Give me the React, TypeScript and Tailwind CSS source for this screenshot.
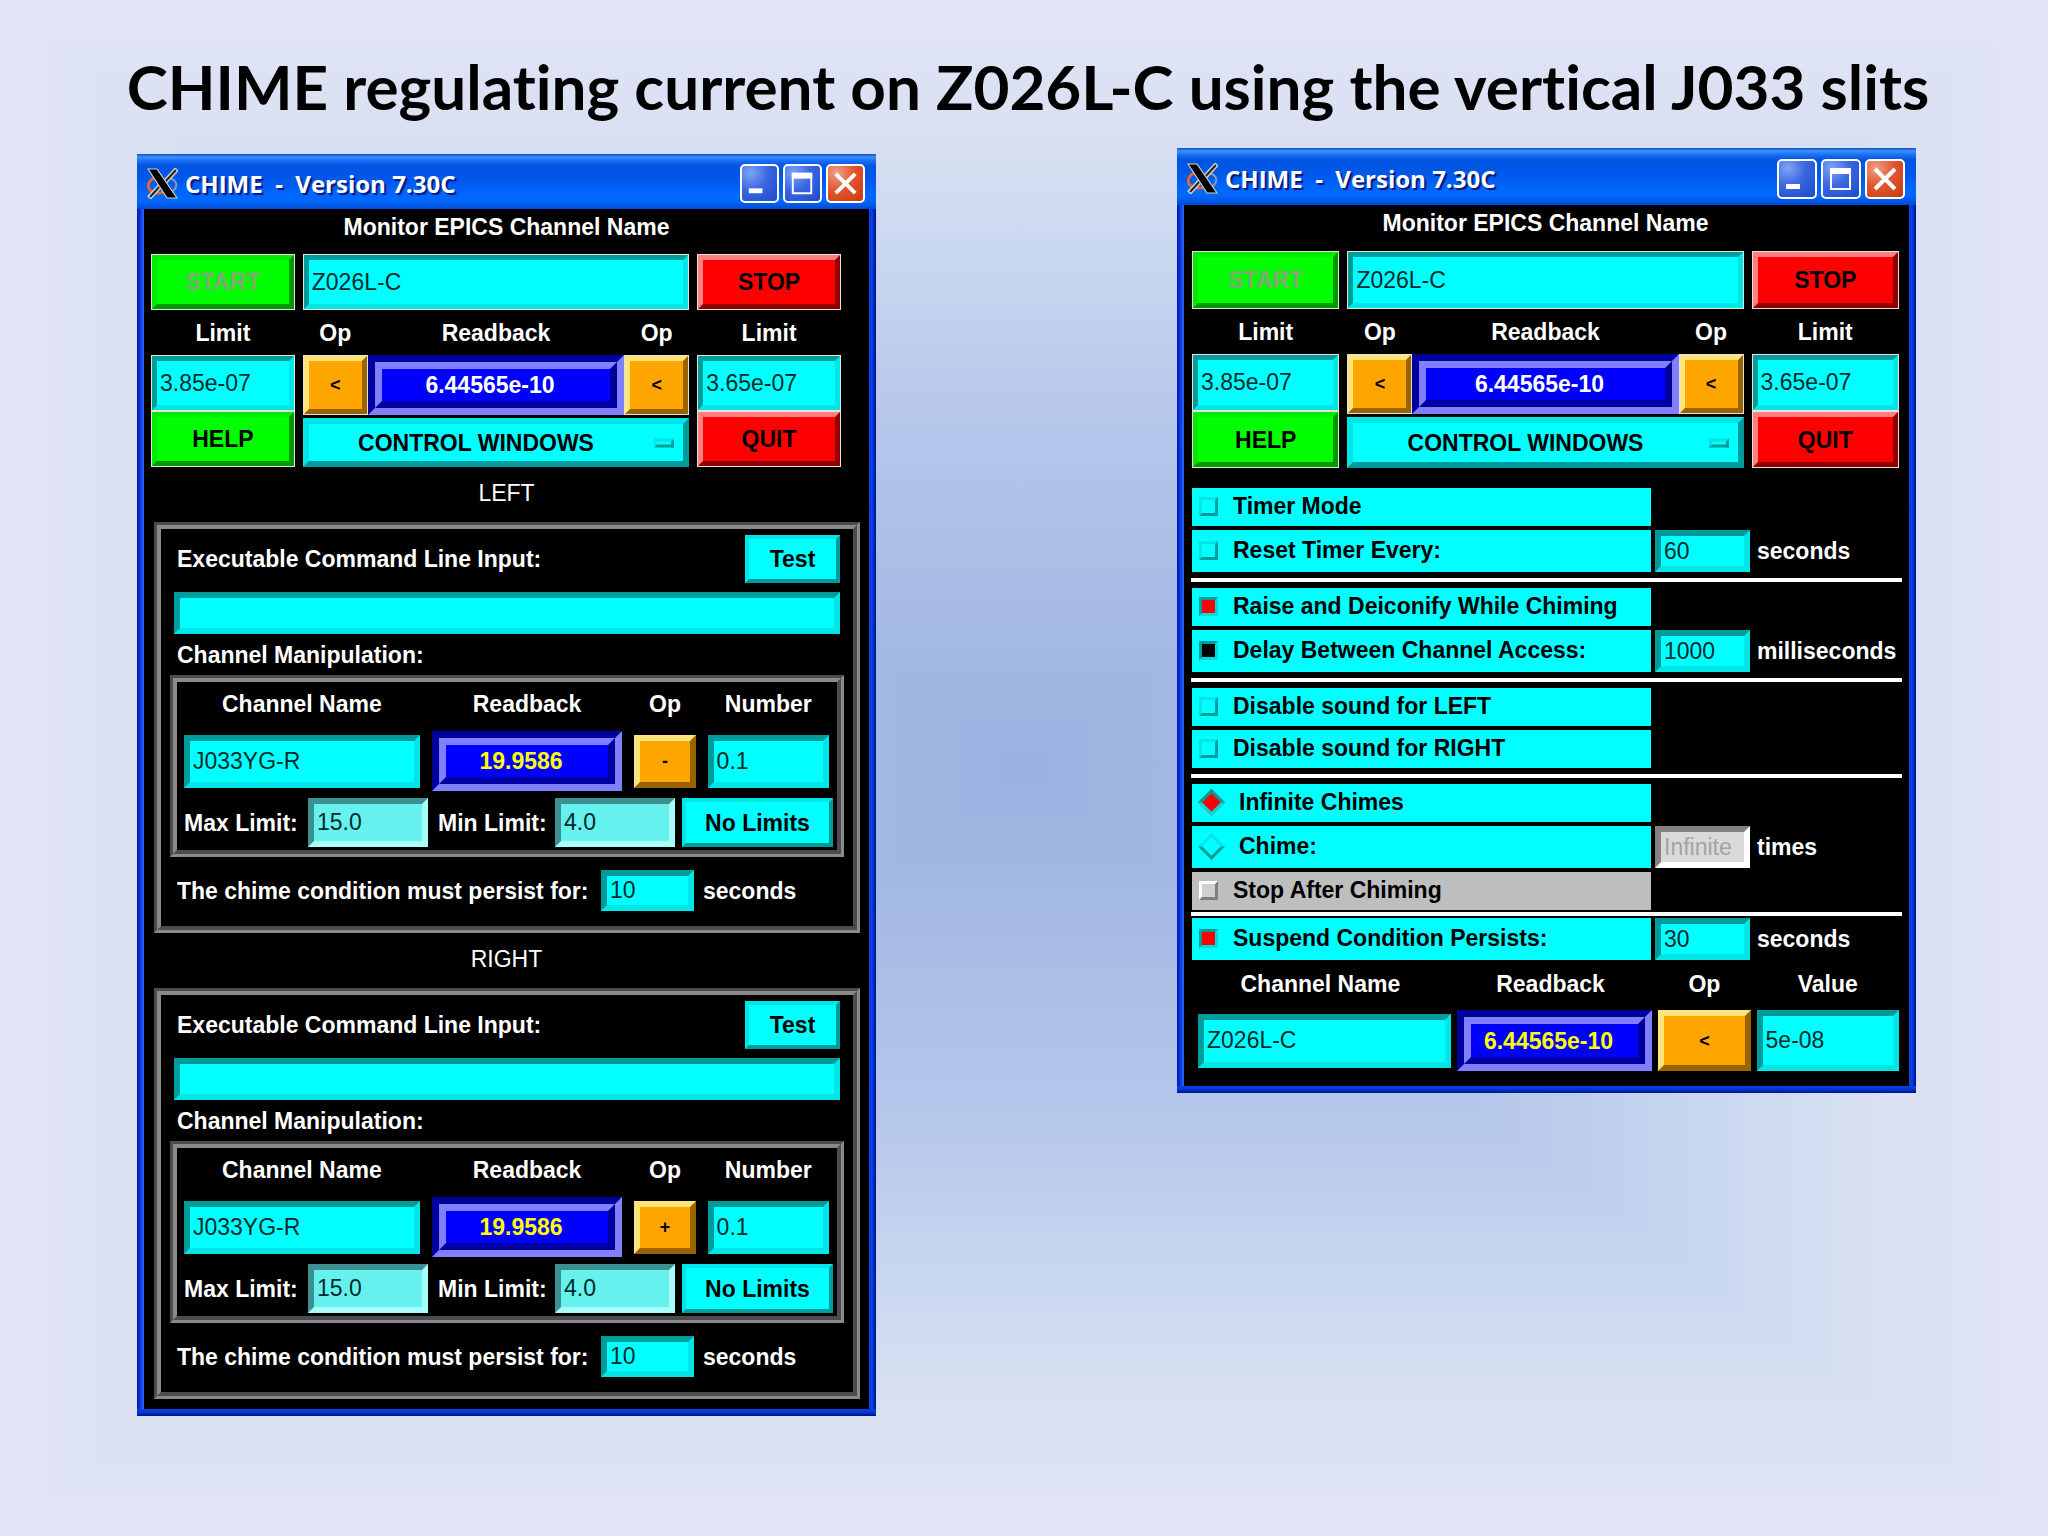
import React, { useId } from 'react';

const raisedCyan = 'border-t-[#00e6e6] border-l-[#00e6e6] border-b-[#009c9c] border-r-[#009c9c] bg-[#00ffff]';
const sunkenCyan = 'border-t-[#009c9c] border-l-[#009c9c] border-b-[#00e6e6] border-r-[#00e6e6] bg-[#00ffff]';
const sunkenPale = 'border-t-[#3c9090] border-l-[#3c9090] border-b-[#a8fffa] border-r-[#a8fffa] bg-[#66f0ee]';
const sunkenGray = 'border-t-[#868284] border-l-[#868284] border-b-white border-r-white bg-[#dcd9db] text-[#a3a3a3]';
const raisedGreen = 'border-t-[#00ea00] border-l-[#00ea00] border-b-[#009a00] border-r-[#009a00] bg-[#00ff00]';
const raisedRed = 'border-t-[#ff8080] border-l-[#ff8080] border-b-[#900000] border-r-[#900000] bg-[#ff0000]';
const raisedOrange = 'border-t-[#ffe47a] border-l-[#ffe47a] border-b-[#996300] border-r-[#996300] bg-[#ffa500]';
const outlined = 'outline-1 -outline-offset-1 outline-[#e6e2d6]';

const Backdrop = () => (
  <svg className="absolute inset-0 -z-10 h-full w-full" viewBox="0 0 100 100" preserveAspectRatio="none" aria-hidden="true">
    <defs>
      <linearGradient id="fade-y" x1="0" y1="0" x2="0" y2="1">
        <stop offset="0" stopColor="#e2e4f7" />
        <stop offset="0.08" stopColor="#d9e1f2" />
        <stop offset="0.16" stopColor="#cad8ef" />
        <stop offset="0.28" stopColor="#b4c6ea" />
        <stop offset="0.5" stopColor="#9ab1e0" />
        <stop offset="0.72" stopColor="#b4c6ea" />
        <stop offset="0.84" stopColor="#cad8ef" />
        <stop offset="0.92" stopColor="#d9e1f2" />
        <stop offset="1" stopColor="#e2e4f7" />
      </linearGradient>
      <linearGradient id="fade-x" gradientUnits="userSpaceOnUse" x1="0" y1="0" x2="100" y2="0">
        <stop offset="0" stopColor="#e2e4f7" />
        <stop offset="0.08" stopColor="#d9e1f2" />
        <stop offset="0.16" stopColor="#cad8ef" />
        <stop offset="0.28" stopColor="#b4c6ea" />
        <stop offset="0.5" stopColor="#9ab1e0" />
        <stop offset="0.72" stopColor="#b4c6ea" />
        <stop offset="0.84" stopColor="#cad8ef" />
        <stop offset="0.92" stopColor="#d9e1f2" />
        <stop offset="1" stopColor="#e2e4f7" />
      </linearGradient>
    </defs>
    <rect width="100" height="100" fill="url(#fade-y)" />
    <path d="M0 0 L50 50 L0 100 Z M100 0 L50 50 L100 100 Z" fill="url(#fade-x)" />
  </svg>
);

const XLogo = () => (
  <svg className="h-[31px] w-[31px] shrink-0" viewBox="0 0 31 31" aria-hidden="true">
    <path d="M7 10 C0 14 0 20 4 23 C9 26 14 26 19 23" fill="none" stroke="#e0643a" strokeWidth="3" />
    <path d="M22 10 C30 12 31 18 27 22 C24 25 21 25 18 23" fill="none" stroke="#8a9bb8" strokeWidth="2" />
    <path d="M30 1 L17 15 M14 17 L2 30" stroke="#d8d4c4" strokeWidth="5" />
    <path d="M29 2 L17 15 M14 17 L3 29" stroke="#222" strokeWidth="2" />
    <path d="M1 1 L10 1 L30 30 L20 30 Z" fill="#000" stroke="#d8d4c4" strokeWidth="1.2" />
  </svg>
);

const captionButton =
  'flex items-center justify-center rounded-[5px] border-2 border-white bg-[radial-gradient(circle_at_25%_20%,#7fa4f8_0%,#3a66e0_45%,#1c4ad0_100%)]';

const TitleBar = ({ large }: { large?: boolean }) => {
  const size = large ? 'h-[40px] w-[40px]' : 'h-[39px] w-[39px]';
  return (
    <div
      className={`flex items-center bg-[linear-gradient(180deg,#0a4fc4_0px,#3b90ff_3px,#1a6cf4_7px,#0054e0_12px,#0058ea_26px,#0068ff_42px,#0066fc_48px,#004ad4_100%)] pt-1 pr-[11px] pl-[10px] ${large ? 'h-[57px]' : 'h-[55px]'}`}
    >
      <XLogo />
      <h2 className="flex-1 pl-[7px] font-['Open_Sans','Noto_Sans',sans-serif] text-[24px] leading-[30px] font-bold whitespace-pre text-white [text-shadow:2px_2px_1px_#0a1883]">
        {'CHIME  -  Version 7.30C'}
      </h2>
      <div className="flex gap-1">
        <button type="button" aria-label="Minimize" className={`${captionButton} ${size}`}>
          <svg className="h-full w-full" viewBox="0 0 36 36">
            <rect x="7" y="23" width="14" height="5" fill="#fff" />
          </svg>
        </button>
        <button type="button" aria-label="Maximize" className={`${captionButton} ${size}`}>
          <svg className="h-full w-full" viewBox="0 0 36 36">
            <path d="M8 8 H27 V28 H8 Z" fill="none" stroke="#fff" strokeWidth="2" />
            <rect x="7" y="7" width="21" height="6" fill="#fff" />
          </svg>
        </button>
        <button
          type="button"
          aria-label="Close"
          className={`flex items-center justify-center rounded-[5px] border-2 border-white bg-[radial-gradient(circle_at_25%_20%,#f0a088_0%,#e2562f_45%,#c8380e_100%)] ${size}`}
        >
          <svg className="h-full w-full" viewBox="0 0 36 36">
            <path d="M8 8 L28 28 M28 8 L8 28" stroke="#fff" strokeWidth="4" />
          </svg>
        </button>
      </div>
    </div>
  );
};

const Window = ({ large, children }: { large?: boolean; children: React.ReactNode }) => (
  <section className="bg-[linear-gradient(90deg,#0014b8_0px,#0a35dc_3px,#2f66f2_7px,#0a3ee0_20px,#0a3ee0_calc(100%-7px),#0540e4_calc(100%-4px),#00108c_100%)]">
    <TitleBar large={large} />
    <div className="mx-[7px] bg-black text-white">{children}</div>
    <div className="h-[7px] bg-[linear-gradient(180deg,#0a44e4,#0334d0_50%,#00108c)]" />
  </section>
);

const Readback = ({ value, color = 'text-white' }: { value: string; color?: string }) => (
  <div className="flex h-full w-full min-w-0 border-[7px] border-t-[#00009c] border-r-[#8080ff] border-b-[#8080ff] border-l-[#00009c]">
    <output
      className={`flex flex-1 items-center justify-center border-[7px] border-t-[#8080ff] border-r-[#00009c] border-b-[#0000a4] border-l-[#8080ff] bg-[#0000ff] pr-[12px] font-bold whitespace-nowrap ${color}`}
    >
      {value}
    </output>
  </div>
);

const Entry = ({ label, id, value, className = '', tone = sunkenCyan, disabled }: {
  label?: string;
  id?: string;
  value: string;
  className?: string;
  tone?: string;
  disabled?: boolean;
}) => (
  <input
    type="text"
    id={id}
    aria-label={label}
    defaultValue={value}
    disabled={disabled}
    className={`min-w-0 rounded-none border-[6px] pl-[3px] ${disabled ? '' : 'text-[#002b2b]'} ${tone} ${className}`}
  />
);

const OpButton = ({ op, className = '' }: { op: string; className?: string }) => (
  <button type="button" aria-label={`Operator ${op}`} className={`border-[6px] text-[18px] font-bold text-black ${raisedOrange} ${className}`}>
    {op}
  </button>
);

const MonitorHeader = ({ large }: { large?: boolean }) => {
  const cols = 'grid grid-cols-[144fr_387fr_144fr] gap-x-[8px]';
  const half = large ? 'h-[57px]' : 'h-[56px]';
  return (
    <header className={large ? 'pr-[10px] pl-[8px]' : 'pr-[28px] pl-[7px]'}>
      <p className={`pt-1 text-center font-bold ${large ? 'h-[46px]' : 'ml-[21px] h-[45px]'}`}>Monitor EPICS Channel Name</p>
      <div className={`${cols} ${large ? 'h-[58px]' : 'h-[56px]'}`}>
        <button type="button" disabled className={`border-[6px] font-bold text-[#86a678] ${raisedGreen} ${outlined}`}>START</button>
        <Entry label="Monitor EPICS Channel Name" value="Z026L-C" className={outlined} />
        <button type="button" className={`border-[6px] font-bold text-black ${raisedRed} ${outlined}`}>STOP</button>
      </div>
      <div className={`${cols} h-[45px] items-center text-center font-bold`}>
        <span>Limit</span>
        <div className="flex">
          <span className="w-[65px]">Op</span>
          <span className="flex-1">Readback</span>
          <span className="w-[65px]">Op</span>
        </div>
        <span>Limit</span>
      </div>
      <div className={cols}>
        <div className="flex min-w-0 flex-col">
          <Entry label="Upper limit" value="3.85e-07" className={`${half} ${outlined}`} />
          <button type="button" className={`border-[6px] font-bold text-black ${half} ${raisedGreen} ${outlined}`}>HELP</button>
        </div>
        <div className="flex min-w-0 flex-col gap-[3px]">
          <div className="flex h-[60px]">
            <OpButton op="<" className={`w-[65px] shrink-0 ${outlined}`} />
            <Readback value="6.44565e-10" />
            <OpButton op="<" className={`w-[65px] shrink-0 ${outlined}`} />
          </div>
          <div className="relative flex flex-1">
            <select
              aria-label="Control windows"
              className={`w-full appearance-none rounded-none border-[6px] pr-[40px] text-center font-bold text-black [text-align-last:center] ${raisedCyan}`}
            >
              <option>CONTROL WINDOWS</option>
            </select>
            <span className={`pointer-events-none absolute top-1/2 right-[15px] h-[9px] w-[20px] -translate-y-1/2 border-[3px] ${raisedCyan}`} />
          </div>
        </div>
        <div className="flex min-w-0 flex-col">
          <Entry label="Lower limit" value="3.65e-07" className={`${half} ${outlined}`} />
          <button type="button" className={`border-[6px] font-bold text-black ${half} ${raisedRed} ${outlined}`}>QUIT</button>
        </div>
      </div>
    </header>
  );
};

const Groove = ({ className = '', children }: { className?: string; children: React.ReactNode }) => (
  <div className={`border-[3px] border-t-[#4d4b4d] border-r-[#8b898b] border-b-[#8b898b] border-l-[#4d4b4d] ${className}`}>
    <div className="border-4 border-t-[#8b898b] border-r-[#4d4b4d] border-b-[#4d4b4d] border-l-[#8b898b]">{children}</div>
  </div>
);

const SidePanel = ({ side, op }: { side: string; op: string }) => {
  const id = useId();
  return (
    <>
      <h3 className="flex h-[55px] items-center justify-center pb-1">{side}</h3>
      <Groove className="mr-[9px] ml-[10px]">
        <div className="px-[9px] pt-[6px] pb-[15px]">
          <div className="mx-1 flex h-[48px] items-center justify-between pl-[3px]">
            <label htmlFor={`${id}-cmd`} className="font-bold">Executable Command Line Input:</label>
            <button type="button" className={`h-full w-[95px] border-4 font-bold text-black ${raisedCyan}`}>Test</button>
          </div>
          <div className="mx-1 mt-[9px] flex h-[42px]">
            <Entry id={`${id}-cmd`} value="" className="w-full" />
          </div>
          <p className="ml-[7px] flex h-[41px] items-center font-bold">Channel Manipulation:</p>
          <Groove>
            <div className="pr-[4px] pb-[3px] pl-[7px]">
              <div className="mr-[4px] grid grid-cols-[235fr_190fr_61fr_121fr] items-center gap-x-[12px] text-center">
                <span className="h-[49px] pt-2 font-bold">Channel Name</span>
                <span className="h-[49px] pt-2 font-bold">Readback</span>
                <span className="h-[49px] pt-2 font-bold">Op</span>
                <span className="h-[49px] pt-2 font-bold">Number</span>
                <Entry label={`${side} channel name`} value="J033YG-R" className="h-[53px]" />
                <div className="h-[60px]">
                  <Readback value="19.9586" color="text-[#ffff00]" />
                </div>
                <OpButton op={op} className="h-[53px]" />
                <Entry label={`${side} number`} value="0.1" className="h-[53px]" />
              </div>
              <div className="mt-[7px] flex h-[49px] items-center font-bold">
                <label htmlFor={`${id}-max`} className="w-[124px]">Max Limit:</label>
                <Entry id={`${id}-max`} value="15.0" tone={sunkenPale} className="h-full w-[120px] font-normal" />
                <label htmlFor={`${id}-min`} className="ml-[10px] w-[117px]">Min Limit:</label>
                <Entry id={`${id}-min`} value="4.0" tone={sunkenPale} className="h-full w-[120px] font-normal" />
                <button type="button" className={`ml-[7px] h-full flex-1 border-4 text-black ${raisedCyan}`}>No Limits</button>
              </div>
            </div>
          </Groove>
          <div className="mt-[13px] ml-[7px] flex h-[41px] items-center font-bold">
            <label htmlFor={`${id}-persist`} className="w-[424px]">The chime condition must persist for:</label>
            <Entry id={`${id}-persist`} value="10" className="h-full w-[93px] font-normal" />
            <span className="ml-[9px]">seconds</span>
          </div>
        </div>
      </Groove>
    </>
  );
};

type OptionProps = {
  label: string;
  type?: 'checkbox' | 'radio';
  checked?: boolean;
  mark?: string;
  muted?: boolean;
  entry?: string;
  unit?: string;
};

const OptionRow = ({ label, type = 'checkbox', checked, mark = 'bg-[#ff0000]', muted, entry, unit }: OptionProps) => {
  const grayBox = 'border-t-white border-l-white border-b-[#7f7f7f] border-r-[#7f7f7f] bg-[#d0d0d0]';
  const onBox = 'border-t-[#009c9c] border-l-[#009c9c] border-b-[#00dcdc] border-r-[#00dcdc]';
  const box = muted ? grayBox : checked ? `${onBox} ${mark}` : raisedCyan;
  const shape = type === 'radio' ? 'ml-[3px] mr-[18px] rotate-45' : 'mr-[15px]';
  return (
    <div className={`mx-[8px] flex items-center ${entry ? 'h-[42px]' : 'h-[38px]'}`}>
      <label className={`flex h-full w-[459px] items-center pb-[2px] pl-[7px] font-bold text-black ${muted ? 'bg-[#bebebe]' : 'bg-[#00ffff]'}`}>
        <input
          type={type}
          name={type === 'radio' ? 'chime-count' : undefined}
          defaultChecked={checked}
          disabled={muted}
          className={`h-[19px] w-[19px] shrink-0 appearance-none rounded-none border-[3px] ${box} ${shape}`}
        />
        {label}
      </label>
      {entry && (
        <>
          <Entry
            label={label}
            value={entry}
            disabled={entry === 'Infinite'}
            tone={entry === 'Infinite' ? sunkenGray : sunkenCyan}
            className="ml-1 h-full w-[95px]"
          />
          <span className="ml-[7px] font-bold">{unit}</span>
        </>
      )}
    </div>
  );
};

const Rule = ({ tight }: { tight?: boolean }) => (
  <hr className={`mr-[7px] ml-[7px] h-1 border-0 bg-white ${tight ? '-my-[2px]' : 'my-[2px]'}`} />
);

const App = () => {
  return (
    <main className="relative isolate min-h-screen overflow-hidden font-['Liberation_Sans',Arial,sans-serif] text-[23px] leading-[28px]">
      <Backdrop />
      <h1 className="flex h-[148px] items-center justify-center pt-[24px] pl-2 text-center font-['Lato','Open_Sans',sans-serif] text-[62px] leading-[80px] font-bold text-black [font-variant-ligatures:none]">
        CHIME regulating current on Z026L-C using the vertical J033 slits
      </h1>
      <div className="grid grid-cols-2 items-start gap-x-[301px] pr-[132px] pl-[137px]">
        <div className="pt-[6px]">
          <Window>
            <MonitorHeader />
            <SidePanel side="LEFT" op="-" />
            <SidePanel side="RIGHT" op="+" />
            <div className="h-[10px]" />
          </Window>
        </div>
        <Window large>
          <MonitorHeader large />
          <div className="mt-5 flex flex-col gap-1">
            <OptionRow label="Timer Mode" />
            <OptionRow label="Reset Timer Every:" entry="60" unit="seconds" />
            <Rule />
            <OptionRow label="Raise and Deiconify While Chiming" checked />
            <OptionRow label="Delay Between Channel Access:" checked mark="bg-black" entry="1000" unit="milliseconds" />
            <Rule />
            <OptionRow label="Disable sound for LEFT" />
            <OptionRow label="Disable sound for RIGHT" />
            <Rule />
            <OptionRow label="Infinite Chimes" type="radio" checked />
            <OptionRow label="Chime:" type="radio" entry="Infinite" unit="times" />
            <OptionRow label="Stop After Chiming" muted />
            <Rule tight />
            <OptionRow label="Suspend Condition Persists:" checked entry="30" unit="seconds" />
          </div>
          <div className="grid grid-cols-[252fr_195fr_92fr_142fr] items-center gap-x-[6px] pr-[10px] pb-[15px] pl-[14px] text-center">
            <span className="h-[50px] pt-[10px] pr-2 font-bold">Channel Name</span>
            <span className="h-[50px] pt-[10px] pr-2 font-bold">Readback</span>
            <span className="h-[50px] pt-[10px] font-bold">Op</span>
            <span className="h-[50px] pt-[10px] font-bold">Value</span>
            <Entry label="Suspend channel name" value="Z026L-C" className="h-[54px]" />
            <div className="h-[61px]">
              <Readback value="6.44565e-10" color="text-[#ffff00]" />
            </div>
            <OpButton op="<" className="h-[61px]" />
            <Entry label="Suspend value" value="5e-08" className="h-[61px]" />
          </div>
        </Window>
      </div>
    </main>
  );
};

export default App;
